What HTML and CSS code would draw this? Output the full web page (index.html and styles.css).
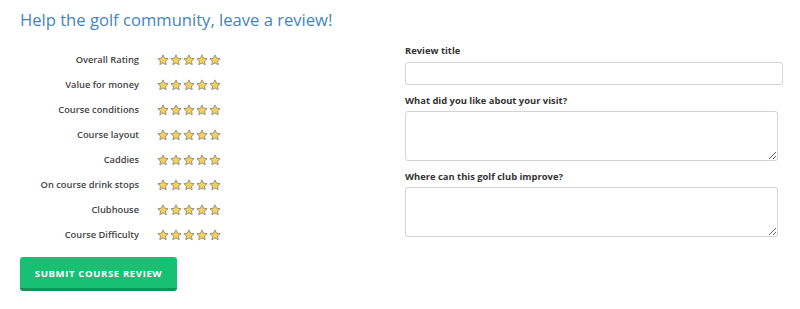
FILE: index.html
```html
<!DOCTYPE html>
<html>
<head>
<meta charset="utf-8">
<link rel="stylesheet" href="styles.css">
</head>
<body>
<svg width="0" height="0" class="defs">
  <defs>
    <symbol id="star" viewBox="0 0 24 24">
      <path d="M12 1.8l3.1 6.6 7.2.9-5.3 5 1.4 7.1L12 17.9l-6.4 3.5 1.4-7.1-5.3-5 7.2-.9z" fill="#f3d15a" stroke="#8d8a7c" stroke-width="1.8" stroke-linejoin="round"/>
    </symbol>
  </defs>
</svg>
<div class="page">
  <div class="left">
    <h1 class="title">Help the golf community, leave a review!</h1>
    <div class="ratings">
      <div class="label">Overall Rating</div><div class="stars"><svg><use href="#star"/></svg><svg><use href="#star"/></svg><svg><use href="#star"/></svg><svg><use href="#star"/></svg><svg><use href="#star"/></svg></div>
      <div class="label">Value for money</div><div class="stars"><svg><use href="#star"/></svg><svg><use href="#star"/></svg><svg><use href="#star"/></svg><svg><use href="#star"/></svg><svg><use href="#star"/></svg></div>
      <div class="label">Course conditions</div><div class="stars"><svg><use href="#star"/></svg><svg><use href="#star"/></svg><svg><use href="#star"/></svg><svg><use href="#star"/></svg><svg><use href="#star"/></svg></div>
      <div class="label">Course layout</div><div class="stars"><svg><use href="#star"/></svg><svg><use href="#star"/></svg><svg><use href="#star"/></svg><svg><use href="#star"/></svg><svg><use href="#star"/></svg></div>
      <div class="label">Caddies</div><div class="stars"><svg><use href="#star"/></svg><svg><use href="#star"/></svg><svg><use href="#star"/></svg><svg><use href="#star"/></svg><svg><use href="#star"/></svg></div>
      <div class="label">On course drink stops</div><div class="stars"><svg><use href="#star"/></svg><svg><use href="#star"/></svg><svg><use href="#star"/></svg><svg><use href="#star"/></svg><svg><use href="#star"/></svg></div>
      <div class="label">Clubhouse</div><div class="stars"><svg><use href="#star"/></svg><svg><use href="#star"/></svg><svg><use href="#star"/></svg><svg><use href="#star"/></svg><svg><use href="#star"/></svg></div>
      <div class="label">Course Difficulty</div><div class="stars"><svg><use href="#star"/></svg><svg><use href="#star"/></svg><svg><use href="#star"/></svg><svg><use href="#star"/></svg><svg><use href="#star"/></svg></div>
    </div>
    <button class="submit" type="button">Submit Course Review</button>
  </div>
  <div class="right">
    <label class="field-label">Review title</label>
    <input class="input" type="text">
    <label class="field-label">What did you like about your visit?</label>
    <textarea class="textarea"></textarea>
    <label class="field-label">Where can this golf club improve?</label>
    <textarea class="textarea"></textarea>
  </div>
</div>
</body>
</html>
```
FILE: styles.css
```css
* { box-sizing: border-box; }
html, body { margin: 0; padding: 0; background: #fff; }
body { font-family: "Open Sans", "Liberation Sans", sans-serif; color: #444; }
.defs { position: absolute; }
.page { display: flex; padding: 8px 0 0 20px; }
.left { width: 385px; display: flex; flex-direction: column; align-items: flex-start; }
.title { margin: 0; font-size: 16.6px; line-height: 24px; font-weight: 400; color: #4585c0; }
.ratings { display: grid; grid-template-columns: 119px auto; column-gap: 18px; grid-auto-rows: 25px; margin-top: 15.5px; }
.label { font-size: 9.3px; font-weight: 600; text-align: right; line-height: 24px; color: #444; }
.stars { display: flex; gap: 1px; align-items: center; }
.stars svg { width: 12px; height: 12px; }
.submit { margin-top: 9.5px; width: 157px; height: 34px; border: none; border-bottom: 3px solid #11935a; border-radius: 3px; background: #18c074; color: #fff; font-family: "Open Sans", "Liberation Sans", sans-serif; font-weight: 700; font-size: 9.6px; letter-spacing: 0.6px; text-transform: uppercase; padding: 2px 0 0; }
.right { display: flex; flex-direction: column; padding-top: 36px; width: 378px; }
.field-label { font-size: 9.4px; font-weight: 700; line-height: 14px; color: #333; }
.input { margin-top: 4px; width: 378px; height: 23px; border: 1px solid #d3d3d3; border-radius: 3px; }
.textarea { margin-top: 3px; width: 373px; height: 50px; border: 1px solid #d3d3d3; border-radius: 3px; resize: vertical; }
.input + .field-label { margin-top: 9px; }
.textarea + .field-label { margin-top: 9px; }
```
